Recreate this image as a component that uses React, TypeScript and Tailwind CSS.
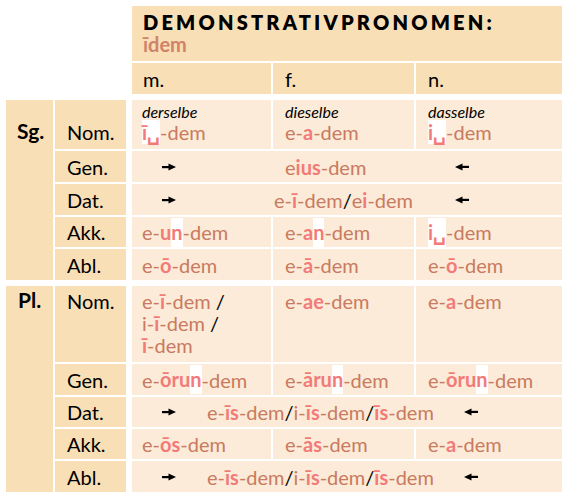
import type { ReactNode } from 'react';

const hd = 'bg-[#f9dfb6]';
const bd = 'bg-[#fbebd8]';
const cols = 'grid grid-cols-[47px_71px_2px_139px_141px_146px] gap-[2px]';

function B({ children }: { children: ReactNode }) {
  return <span className="font-bold text-[#f27b79]">{children}</span>;
}

function W({ children, tall }: { children: ReactNode; tall?: boolean }) {
  return <span className={tall ? 'inline-block bg-white leading-[29px]' : 'bg-white'}>{children}</span>;
}

function Sl({ children = '/' }: { children?: ReactNode }) {
  return <span className="text-black">{children}</span>;
}

function Arrow({ left }: { left?: boolean }) {
  return (
    <svg width="14" height="8" viewBox="0 0 14 8" className={left ? 'block rotate-180' : 'block'}>
      <rect x="0" y="3" width="8" height="2.2" fill="#000" />
      <path d="M6.5 0.5L14 4L6.5 7.5Z" fill="#000" />
    </svg>
  );
}

function Label({ children, className = '' }: { children: ReactNode; className?: string }) {
  return <div className={`${hd} col-start-2 flex items-center pl-[12px] ${className}`}>{children}</div>;
}

function Cell({ children, className = '' }: { children: ReactNode; className?: string }) {
  return <div className={`${bd} flex items-center whitespace-nowrap text-[#c97a5f] ${className}`}>{children}</div>;
}

export default function App() {
  return (
    <div className="min-h-screen bg-white pl-[6px] pt-[6px] font-['Lato',sans-serif] text-[20px] leading-[22px] text-black">
      {/* title + genders */}
      <div className={cols}>
        <div className={`${hd} col-start-4 col-span-3 h-[55px] pl-[11px] pt-[5px] text-[20px] font-extrabold`}>
          <div className="tracking-[0.16em]">DEMONSTRATIVPRONOMEN:</div>
          <div className="font-bold text-[#d0836a]">īdem</div>
        </div>
        <div className={`${hd} col-start-4 flex h-[31px] items-center pl-[11px]`}>m.</div>
        <div className={`${hd} col-start-5 flex h-[31px] items-center pl-[12px]`}>f.</div>
        <div className={`${hd} col-start-6 flex h-[31px] items-center pl-[12px]`}>n.</div>
      </div>

      {/* Singular */}
      <div className={`${cols} mt-[6px] grid-rows-[49px_31px_31px_30px_31px]`}>
        <div className={`${hd} col-start-1 row-span-5 row-start-1 pl-[11px] pt-[20px] text-[21px] font-bold`}>Sg.</div>

        <div className={`${hd} col-start-2 row-start-1 pl-[12px] pt-[21px]`}>Nom.</div>
        <div className={`${bd} col-start-4 row-start-1 pl-[10px] pt-[3px] text-[#c97a5f]`}>
          <div className="text-[16px] leading-[18px] italic text-black">derselbe</div>
          <div><W><B>ī␣</B></W>-dem</div>
        </div>
        <div className={`${bd} col-start-5 row-start-1 pl-[12px] pt-[3px] text-[#c97a5f]`}>
          <div className="text-[16px] leading-[18px] italic text-black">dieselbe</div>
          <div>e-<B>a</B>-dem</div>
        </div>
        <div className={`${bd} col-start-6 row-start-1 pl-[12px] pt-[3px] text-[#c97a5f]`}>
          <div className="text-[16px] leading-[18px] italic text-black">dasselbe</div>
          <div><W><B>i␣</B></W>-dem</div>
        </div>

        <Label className="row-start-2">Gen.</Label>
        <div className={`${bd} col-start-4 col-span-3 row-start-2 grid grid-cols-[139px_141px_146px] items-center gap-x-[2px] text-[#c97a5f]`}>
          <div className="pl-[30px]"><Arrow /></div>
          <div className="pl-[12px]">e<B>ius</B>-dem</div>
          <div className="pl-[39px]"><Arrow left /></div>
        </div>

        <Label className="row-start-3">Dat.</Label>
        <div className={`${bd} col-start-4 col-span-3 row-start-3 grid grid-cols-[139px_141px_146px] items-center gap-x-[2px] text-[#c97a5f]`}>
          <div className="pl-[30px]"><Arrow /></div>
          <div className="flex justify-center whitespace-nowrap">e-<B>ī</B>-dem<Sl />e<B>i</B>-dem</div>
          <div className="pl-[39px]"><Arrow left /></div>
        </div>

        <Label className="row-start-4">Akk.</Label>
        <Cell className="col-start-4 row-start-4 pl-[10px]">e-<B>u<W tall>n</W></B>-dem</Cell>
        <Cell className="col-start-5 row-start-4 pl-[12px]">e-<B>a<W tall>n</W></B>-dem</Cell>
        <Cell className="col-start-6 row-start-4 pl-[12px]"><W tall><B>i␣</B></W>-dem</Cell>

        <Label className="row-start-5">Abl.</Label>
        <Cell className="col-start-4 row-start-5 pl-[10px]">e-<B>ō</B>-dem</Cell>
        <Cell className="col-start-5 row-start-5 pl-[12px]">e-<B>ā</B>-dem</Cell>
        <Cell className="col-start-6 row-start-5 pl-[12px]">e-<B>ō</B>-dem</Cell>
      </div>

      {/* Plural */}
      <div className={`${cols} mt-[6px] grid-rows-[76px_31px_30px_30px_31px]`}>
        <div className={`${hd} col-start-1 row-span-5 row-start-1 pl-[12px] pt-[3px] text-[21px] font-bold`}>Pl.</div>

        <div className={`${hd} col-start-2 row-start-1 pl-[12px] pt-[4px]`}>Nom.</div>
        <div className={`${bd} col-start-4 row-start-1 whitespace-nowrap pl-[10px] pt-[4px] text-[#c97a5f]`}>
          <div>e-<B>ī</B>-dem <Sl /></div>
          <div>i-<B>ī</B>-dem <Sl /></div>
          <div><B>ī</B>-dem</div>
        </div>
        <div className={`${bd} col-start-5 row-start-1 pl-[12px] pt-[4px] text-[#c97a5f]`}>e-<B>ae</B>-dem</div>
        <div className={`${bd} col-start-6 row-start-1 pl-[12px] pt-[4px] text-[#c97a5f]`}>e-<B>a</B>-dem</div>

        <Label className="row-start-2">Gen.</Label>
        <Cell className="col-start-4 row-start-2 pl-[10px]">e-<B>ōru<W tall>n</W></B>-dem</Cell>
        <Cell className="col-start-5 row-start-2 pl-[12px]">e-<B>āru<W tall>n</W></B>-dem</Cell>
        <Cell className="col-start-6 row-start-2 pl-[12px]">e-<B>ōru<W tall>n</W></B>-dem</Cell>

        <Label className="row-start-3">Dat.</Label>
        <Cell className="col-start-4 col-span-3 row-start-3 pl-[30px]">
          <Arrow />
          <div className="ml-[31px] w-[257px] flex-none">e-<B>īs</B>-dem<Sl />i-<B>īs</B>-dem<Sl /><B>īs</B>-dem</div>
          <Arrow left />
        </Cell>

        <Label className="row-start-4">Akk.</Label>
        <Cell className="col-start-4 row-start-4 pl-[10px]">e-<B>ōs</B>-dem</Cell>
        <Cell className="col-start-5 row-start-4 pl-[12px]">e-<B>ās</B>-dem</Cell>
        <Cell className="col-start-6 row-start-4 pl-[12px]">e-<B>a</B>-dem</Cell>

        <Label className="row-start-5">Abl.</Label>
        <Cell className="col-start-4 col-span-3 row-start-5 pl-[30px]">
          <Arrow />
          <div className="ml-[31px] w-[257px] flex-none">e-<B>īs</B>-dem<Sl />i-<B>īs</B>-dem<Sl /><B>īs</B>-dem</div>
          <Arrow left />
        </Cell>
      </div>
    </div>
  );
}
